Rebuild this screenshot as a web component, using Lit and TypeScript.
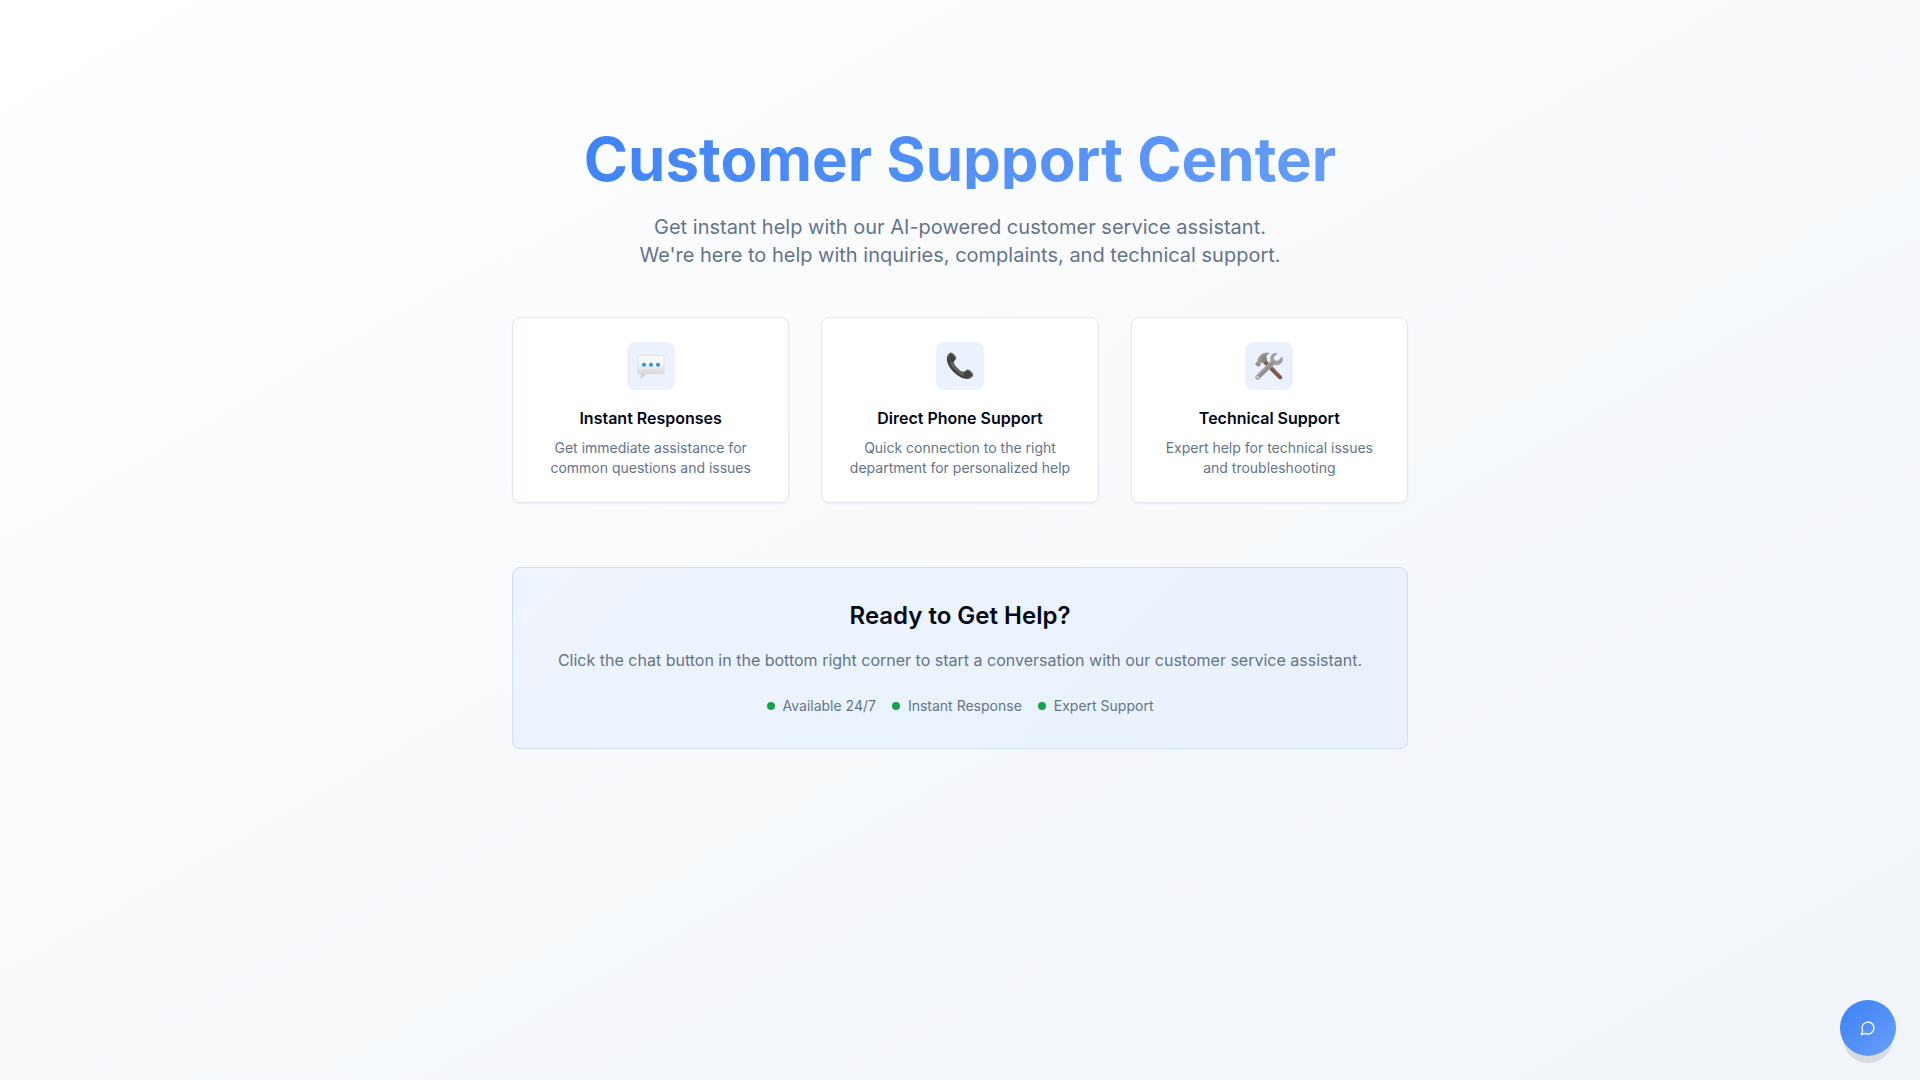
import { LitElement, html, css, svg } from "lit";
import { customElement, property } from "lit/decorators.js";

interface Feature {
  icon: "chat" | "phone" | "tools";
  title: string;
  lines: [string, string];
}

const FEATURES: Feature[] = [
  { icon: "chat", title: "Instant Responses", lines: ["Get immediate assistance for", "common questions and issues"] },
  { icon: "phone", title: "Direct Phone Support", lines: ["Quick connection to the right", "department for personalized help"] },
  { icon: "tools", title: "Technical Support", lines: ["Expert help for technical issues", "and troubleshooting"] },
];

const HIGHLIGHTS = ["Available 24/7", "Instant Response", "Expert Support"];

const ICONS = {
  chat: html`
    <svg class="art" viewBox="0 0 84 84" aria-hidden="true">
      <defs>
        <linearGradient id="bubble" x1="0" y1="0" x2="0" y2="1">
          <stop offset="0" stop-color="#fafafa" />
          <stop offset="0.4" stop-color="#f5f5f5" />
          <stop offset="0.85" stop-color="#d6d6d6" />
          <stop offset="1" stop-color="#d0d0d0" />
        </linearGradient>
      </defs>
      <path
        d="M7 10H77Q81 10 81 14V61Q81 65 77 65H27C24 71 18 76 11 77C9 77 9 75 10 74C13 72 13 69 12 65H7Q3 65 3 61V14Q3 10 7 10Z"
        fill="url(#bubble)"
        stroke="#d4d6da"
        stroke-width="2"
      />
      <circle cx="21" cy="38" r="6" fill="#2196f3" />
      <circle cx="42" cy="38" r="6" fill="#2196f3" />
      <circle cx="63" cy="38" r="6" fill="#2196f3" />
    </svg>
  `,
  phone: html`<span aria-hidden="true">📞</span>`,
  tools: html`
    <svg class="art" viewBox="0 0 84 84" aria-hidden="true">
      <path d="M22 31L31 22L80 73Q83 77 79 81Q75 84 71 80Z" fill="#7b5548" />
      <path d="M31 22L80 73Q83 77 81 79L27 26Z" fill="#8d6558" />
      <path
        d="M1 35L8 28C7 20 13 12 22 6C29 2 39 1 45 4C38 7 33 11 34 16L37 22L27 33L20 31L16 35L17 39L12 44Q8 43 2 38Q0 36 1 35Z"
        fill="#858585"
      />
      <path d="M8 28C7 20 13 12 22 6C29 2 39 1 45 4C34 5 22 11 18 22L16 35L12 40L3 33Z" fill="#9a9a9a" />
      <path
        d="M68 4C62 1 53 3 48 11C45 16 45 22 47 27L3 71C-1 75 0 80 4 82C8 85 12 83 14 80L58 38C65 42 74 39 79 33C84 27 84 20 81 14L70 25C66 28 58 26 57 20C56 17 57 15 59 13Z"
        fill="#9e9e9e"
      />
      <path d="M57 32L14 76L11 73L53 30Z" fill="#8a8a8a" />
      <circle cx="8" cy="76" r="3" fill="#ebf2fe" />
    </svg>
  `,
};

@customElement("feature-card")
export class FeatureCard extends LitElement {
  static styles = css`
    :host {
      display: block;
      box-sizing: border-box;
      padding: 24px;
      border: 1px solid #e2e8f0;
      border-radius: 8px;
      background: #ffffff;
      box-shadow: 0 1px 2px rgba(0, 0, 0, 0.05);
      text-align: center;
    }
    .icon {
      display: flex;
      align-items: center;
      justify-content: center;
      width: 48px;
      height: 48px;
      margin: 0 auto 16px;
      border-radius: 8px;
      background: #ebf2fe;
      font-size: 24px;
      line-height: 32px;
    }
    .art {
      display: block;
      width: 28px;
      height: 28px;
    }
    .title {
      margin: 0 0 8px;
      color: #020817;
      font-size: 16px;
      font-weight: 600;
      line-height: 24px;
    }
    .text {
      margin: 0;
      color: #64748b;
      font-size: 14px;
      line-height: 20px;
    }
  `;

  @property({ attribute: false }) feature!: Feature;

  render() {
    const { icon, title, lines } = this.feature;
    return html`
      <div class="icon">${ICONS[icon]}</div>
      <h3 class="title">${title}</h3>
      <p class="text">${lines[0]}<br />${lines[1]}</p>
    `;
  }
}

const chatIcon = svg`
  <path d="M7.9 20A9 9 0 1 0 4 16.1L2 22Z" />
`;

@customElement("app-root")
export class AppRoot extends LitElement {
  static styles = css`
    :host {
      display: block;
      box-sizing: border-box;
      min-height: 100vh;
      padding: 129px 16px 64px;
      background: linear-gradient(to bottom right, #ffffff 0%, #f8fafc 50%, #f1f5f9 100%);
      color: #020817;
      font-family: Inter, "Noto Color Emoji", sans-serif;
      font-size: 16px;
      line-height: 24px;
    }
    .content {
      max-width: 896px;
      margin: 0 auto;
      text-align: center;
    }
    .headline {
      margin: 0 0 24px;
      background: linear-gradient(135deg, #3b82f6, #699ef8);
      background-clip: text;
      -webkit-background-clip: text;
      color: transparent;
      font-size: 60px;
      font-weight: 700;
      line-height: 60px;
    }
    .lead {
      margin: 0 0 48px;
      color: #64748b;
      font-size: 20px;
      line-height: 28px;
    }
    .features {
      display: grid;
      grid-template-columns: repeat(3, minmax(0, 1fr));
      gap: 32px;
      margin-bottom: 64px;
    }
    .cta {
      padding: 32px;
      border: 1px solid #c9dffb;
      border-radius: 8px;
      background: linear-gradient(135deg, #eff4fd, #ebf3fc 50%, #eaf1fc);
    }
    .cta-title {
      margin: 0 0 16px;
      font-size: 24px;
      font-weight: 600;
      line-height: 32px;
    }
    .cta-text {
      margin: 0 0 24px;
      color: #64748b;
    }
    .highlights {
      display: flex;
      flex-wrap: wrap;
      justify-content: center;
      gap: 16px;
      margin: 0;
      padding: 0;
      list-style: none;
      color: #64748b;
      font-size: 14px;
      line-height: 20px;
    }
    .highlight {
      display: flex;
      align-items: center;
      gap: 8px;
    }
    .highlight::before {
      content: "";
      width: 8px;
      height: 8px;
      border-radius: 50%;
      background: #16a34a;
    }
    .chat {
      position: fixed;
      right: 24px;
      bottom: 24px;
      display: flex;
      align-items: center;
      justify-content: center;
      width: 56px;
      height: 56px;
      padding: 0;
      border: 0;
      border-radius: 50%;
      background: linear-gradient(135deg, #3b82f6, #699ef8);
      box-shadow: 0 10px 0 -3px rgba(0, 0, 0, 0.1);
      color: #f8fafc;
      cursor: pointer;
    }
    .chat-icon {
      width: 16px;
      height: 16px;
      fill: none;
      stroke: currentColor;
      stroke-width: 2;
      stroke-linecap: round;
      stroke-linejoin: round;
    }
    @media (max-width: 760px) {
      .features {
        grid-template-columns: 1fr;
      }
    }
  `;

  render() {
    return html`
      <main class="content">
        <h1 class="headline">Customer Support Center</h1>
        <p class="lead">
          Get instant help with our AI-powered customer service assistant.<br />
          We're here to help with inquiries, complaints, and technical support.
        </p>
        <section class="features">
          ${FEATURES.map((f) => html`<feature-card .feature=${f}></feature-card>`)}
        </section>
        <section class="cta">
          <h2 class="cta-title">Ready to Get Help?</h2>
          <p class="cta-text">
            Click the chat button in the bottom right corner to start a conversation with our customer service assistant.
          </p>
          <ul class="highlights">
            ${HIGHLIGHTS.map((h) => html`<li class="highlight">${h}</li>`)}
          </ul>
        </section>
      </main>
      <button class="chat" type="button" aria-label="Open chat">
        <svg class="chat-icon" viewBox="0 0 24 24" aria-hidden="true">${chatIcon}</svg>
      </button>
    `;
  }
}
